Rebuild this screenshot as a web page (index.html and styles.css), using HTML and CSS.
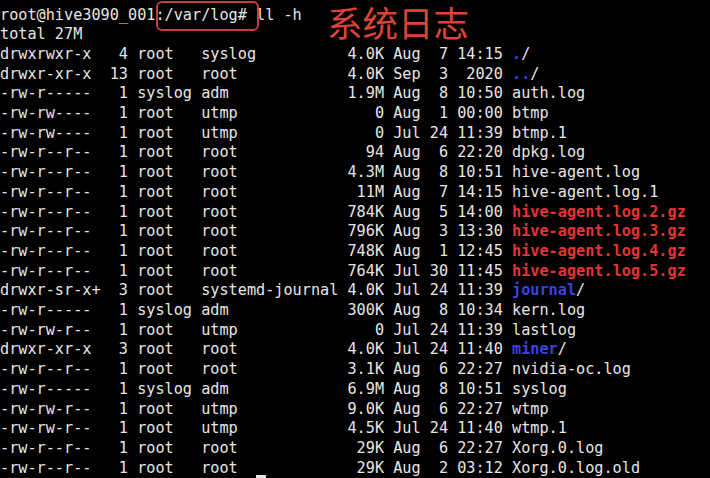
FILE: index.html
```html
<!DOCTYPE html>
<html lang="zh-CN">
<head>
<meta charset="utf-8">
<title>/var/log</title>
<link rel="stylesheet" href="styles.css">
</head>
<body>
<div class="term">
<pre class="screen">root@hive3090_001:/var/log# ll -h
total 27M
drwxrwxr-x   4 root   syslog          4.0K Aug  7 14:15 <span class="dir">.</span>/
drwxr-xr-x  13 root   root            4.0K Sep  3  2020 <span class="dir">..</span>/
-rw-r-----   1 syslog adm             1.9M Aug  8 10:50 auth.log
-rw-rw----   1 root   utmp               0 Aug  1 00:00 btmp
-rw-rw----   1 root   utmp               0 Jul 24 11:39 btmp.1
-rw-r--r--   1 root   root              94 Aug  6 22:20 dpkg.log
-rw-r--r--   1 root   root            4.3M Aug  8 10:51 hive-agent.log
-rw-r--r--   1 root   root             11M Aug  7 14:15 hive-agent.log.1
-rw-r--r--   1 root   root            784K Aug  5 14:00 <span class="gz">hive-agent.log.2.gz</span>
-rw-r--r--   1 root   root            796K Aug  3 13:30 <span class="gz">hive-agent.log.3.gz</span>
-rw-r--r--   1 root   root            748K Aug  1 12:45 <span class="gz">hive-agent.log.4.gz</span>
-rw-r--r--   1 root   root            764K Jul 30 11:45 <span class="gz">hive-agent.log.5.gz</span>
drwxr-sr-x+  3 root   systemd-journal 4.0K Jul 24 11:39 <span class="dir">journal</span>/
-rw-r-----   1 syslog adm             300K Aug  8 10:34 kern.log
-rw-rw-r--   1 root   utmp               0 Jul 24 11:39 lastlog
drwxr-xr-x   3 root   root            4.0K Jul 24 11:40 <span class="dir">miner</span>/
-rw-r--r--   1 root   root            3.1K Aug  6 22:27 nvidia-oc.log
-rw-r-----   1 syslog adm             6.9M Aug  8 10:51 syslog
-rw-rw-r--   1 root   utmp            9.0K Aug  6 22:27 wtmp
-rw-rw-r--   1 root   utmp            4.5K Jul 24 11:40 wtmp.1
-rw-r--r--   1 root   root             29K Aug  6 22:27 Xorg.0.log
-rw-r--r--   1 root   root             29K Aug  2 03:12 Xorg.0.log.old
                            <span class="cursor"></span></pre>
<div class="mark"></div>
<div class="note">系统日志</div>
</div>
</body>
</html>
```

FILE: styles.css
```css
html, body {
  margin: 0;
  padding: 0;
  background: #000;
  width: 710px;
  height: 478px;
  overflow: hidden;
}

.term {
  position: relative;
  width: 710px;
  height: 478px;
  background: #000;
  overflow: hidden;
}

.screen {
  margin: 0;
  padding: 5.5px 0 0 0;
  font-family: "DejaVu Sans Mono", "Liberation Mono", monospace;
  font-size: 15.2px;
  line-height: 19.7px;
  color: #e6e6e6;
  white-space: pre;
}

.dir {
  color: #3c42e0;
  font-weight: bold;
}

.gz {
  color: #e23535;
  font-weight: bold;
}

.cursor {
  display: inline-block;
  width: 10px;
  height: 12px;
  margin-top: -3px;
  background: #e6e6e6;
  vertical-align: top;
}

.mark {
  position: absolute;
  left: 156px;
  top: 1px;
  width: 103px;
  height: 30px;
  box-sizing: border-box;
  border: 2px solid #cc3b3b;
  border-radius: 6px;
}

.note {
  position: absolute;
  left: 327px;
  top: 4px;
  font-family: "Noto Sans CJK SC", sans-serif;
  font-size: 35.5px;
  line-height: 1;
  color: #dc4336;
}
```
